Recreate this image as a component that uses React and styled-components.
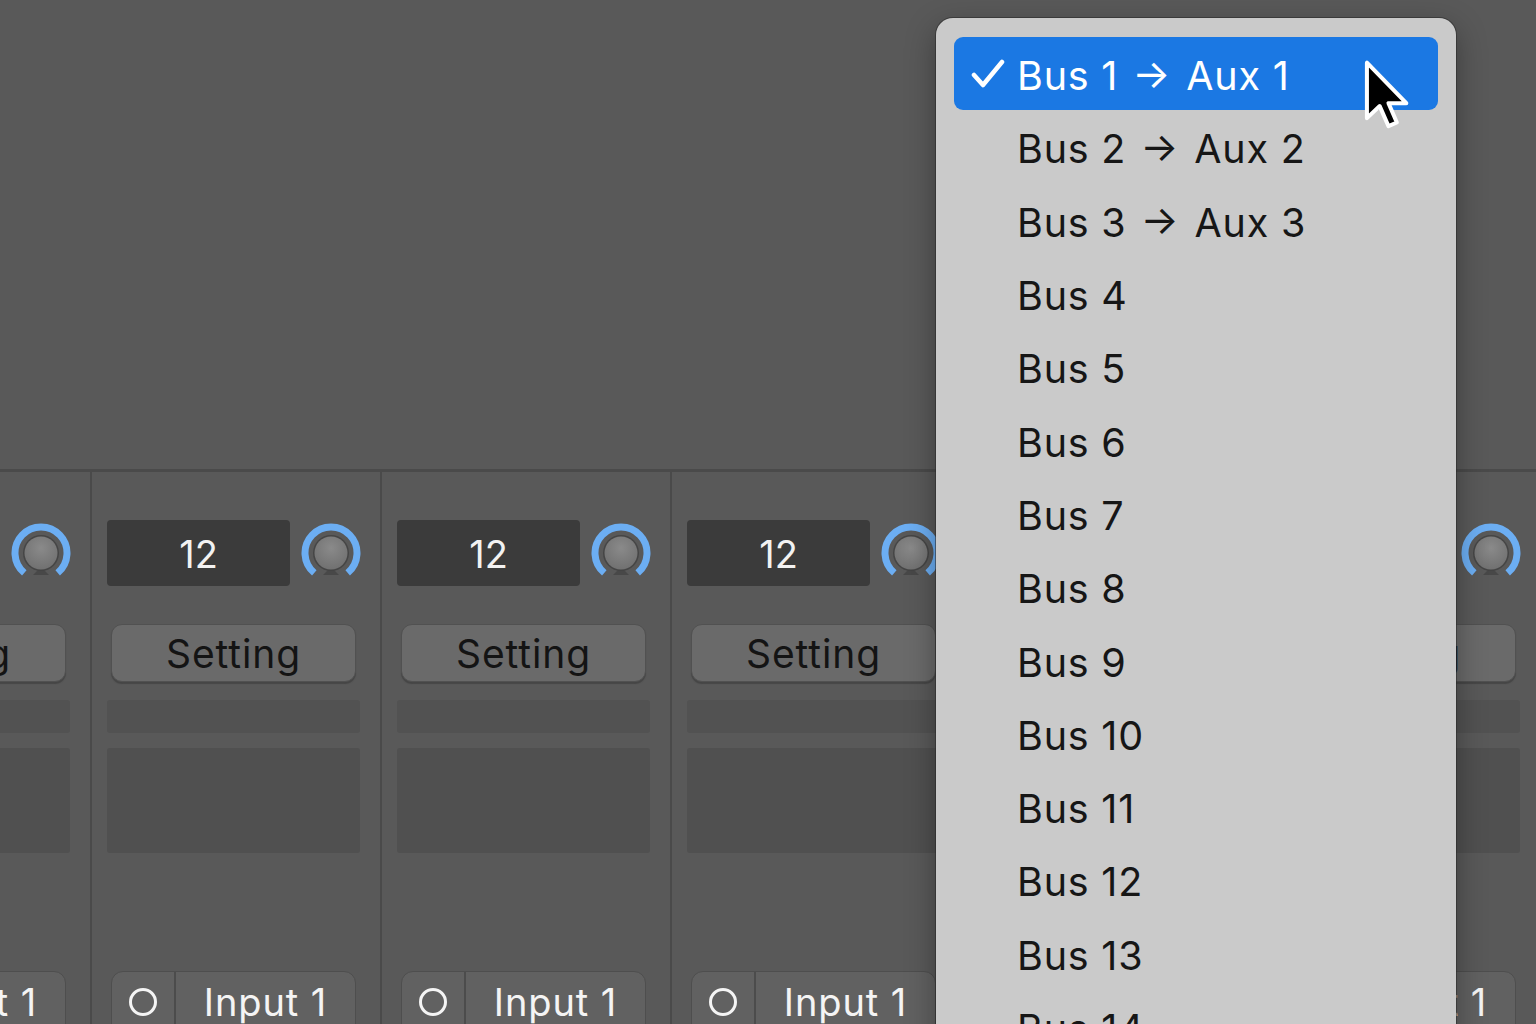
import React from "react";
import styled, { createGlobalStyle } from "styled-components";

const Global = createGlobalStyle`
  html, body { margin: 0; padding: 0; background: #585858; }
  body { font-family: Inter, "Open Sans", "Liberation Sans", sans-serif; }
  * { box-sizing: border-box; }
`;

const Page = styled.div`
  position: relative;
  width: 1536px;
  height: 1024px;
  overflow: hidden;
  background: #595959;
`;

const TopArea = styled.div`
  height: 469px;
  background: #595959;
`;

const StripRow = styled.div`
  display: flex;
  margin-left: -200px;
  border-top: 3px solid #4a4a4a;
`;

const Strip = styled.div`
  flex: 0 0 290px;
  border-left: 2px solid #4a4a4a;
  background: #595959;
  display: flex;
  flex-direction: column;
  align-items: flex-start;
  padding: 48px 0 0 15px;
  & > * { flex-shrink: 0; }
`;

const TopLine = styled.div`
  display: flex;
  align-items: center;
  gap: 12px;
`;

const ValueBox = styled.div`
  width: 183px;
  height: 66px;
  border-radius: 4px;
  background: #3b3b3b;
  color: #f2f2f2;
  font-size: 38px;
  display: flex;
  align-items: center;
  justify-content: center;
  padding-top: 2px;
`;

const KnobWrap = styled.div`
  width: 60px;
  height: 60px;
  margin-left: -1px;
`;

const SettingButton = styled.div`
  margin: 38px 0 0 4px;
  width: 245px;
  height: 58px;
  border-radius: 11px;
  background: #6a6a6a;
  border: 1px solid #515151;
  box-shadow: 0 2px 1px #464646;
  color: #141414;
  font-size: 39px;
  letter-spacing: 0.9px;
  display: flex;
  align-items: center;
  justify-content: center;
`;

const Bar = styled.div`
  width: 253px;
  height: ${(p) => p.$h}px;
  margin-top: ${(p) => p.$mt}px;
  border-radius: 3px;
  background: ${(p) => p.$bg};
`;

const InputButton = styled.div`
  margin: 118px 0 0 4px;
  width: 245px;
  height: 70px;
  border-radius: 12px 12px 0 0;
  background: #616161;
  border: 1px solid #4e4e4e;
  display: flex;
  color: #f4f4f4;
  font-size: 38px;
`;

const RadioSeg = styled.div`
  flex: 0 0 64px;
  height: 100%;
  border-right: 2px solid #4c4c4c;
  display: flex;
  align-items: flex-start;
  justify-content: center;
  padding-top: 16px;
`;

const Ring = styled.div`
  width: 28px;
  height: 28px;
  border-radius: 50%;
  border: 3px solid #f4f4f4;
`;

const InputLabel = styled.div`
  flex: 1;
  text-align: center;
  padding-top: 7px;
  letter-spacing: 0.9px;
`;

const Menu = styled.div`
  position: absolute;
  left: 936px;
  top: 18px;
  width: 520px;
  height: 1100px;
  border-radius: 17px;
  background: #cacaca;
  box-shadow: 0 0 0 1px rgba(40, 40, 40, 0.55), 0 10px 30px rgba(0, 0, 0, 0.35);
  padding: 19px 18px 0 18px;
  display: flex;
  flex-direction: column;
`;

const MenuItem = styled.div`
  height: 73.3px;
  flex: 0 0 73.3px;
  border-radius: 9px;
  background: ${(p) => (p.$selected ? "#1b78e3" : "transparent")};
  color: ${(p) => (p.$selected ? "#ffffff" : "#161616")};
  display: flex;
  align-items: center;
  font-size: 39.5px;
  letter-spacing: 0.8px;
  position: relative;
  padding: 5px 0 0 63px;
  white-space: nowrap;
`;

const Check = styled.svg`
  position: absolute;
  left: 17px;
  top: 22px;
`;

const Arrow = styled.span`
  display: inline-block;
  margin: 0 15px 0 14px;
  font-size: 40px;
  position: relative;
  top: -3px;
`;

const Cursor = styled.svg`
  position: absolute;
  left: 1361px;
  top: 59px;
`;

function Knob() {
  const cx = 30, cy = 30, r = 26;
  const a0 = (130 * Math.PI) / 180;
  const a1 = (50 * Math.PI) / 180;
  const p0 = [cx + r * Math.cos(a0), cy + r * Math.sin(a0)];
  const p1 = [cx + r * Math.cos(a1), cy + r * Math.sin(a1)];
  return (
    <KnobWrap>
      <svg width="60" height="60" viewBox="0 0 60 60">
        <defs>
          <radialGradient id="kg" cx="50%" cy="35%" r="65%">
            <stop offset="0%" stopColor="#8a8a8a" />
            <stop offset="100%" stopColor="#717171" />
          </radialGradient>
        </defs>
        <path
          d={`M ${p0[0]} ${p0[1]} A ${r} ${r} 0 1 1 ${p1[0]} ${p1[1]}`}
          fill="none"
          stroke="#6caef3"
          strokeWidth="7"
        />
        <path d="M 22 52 L 30 44 L 38 52" fill="#484848" />
        <circle cx={cx} cy={cy} r="18" fill="#454545" />
        <circle cx={cx} cy={cy} r="16.5" fill="url(#kg)" />
      </svg>
    </KnobWrap>
  );
}

function ChannelStrip() {
  return (
    <Strip>
      <TopLine>
        <ValueBox>12</ValueBox>
        <Knob />
      </TopLine>
      <SettingButton>Setting</SettingButton>
      <Bar $h={33} $mt={18} $bg="#525252" />
      <Bar $h={105} $mt={15} $bg="#505050" />
      <InputButton>
        <RadioSeg>
          <Ring />
        </RadioSeg>
        <InputLabel>Input 1</InputLabel>
      </InputButton>
    </Strip>
  );
}

const items = [
  ["Bus 1", "Aux 1"],
  ["Bus 2", "Aux 2"],
  ["Bus 3", "Aux 3"],
  ["Bus 4"],
  ["Bus 5"],
  ["Bus 6"],
  ["Bus 7"],
  ["Bus 8"],
  ["Bus 9"],
  ["Bus 10"],
  ["Bus 11"],
  ["Bus 12"],
  ["Bus 13"],
  ["Bus 14"],
];

export default function App() {
  return (
    <Page>
      <Global />
      <TopArea />
      <StripRow>
        {[0, 1, 2, 3, 4, 5].map((i) => (
          <ChannelStrip key={i} />
        ))}
      </StripRow>
      <Menu>
        {items.map(([a, b], i) => (
          <MenuItem key={i} $selected={i === 0}>
            {i === 0 && (
              <Check width="34" height="30" viewBox="0 0 34 30">
                <path
                  d="M3 16 L12 26 L31 3"
                  fill="none"
                  stroke="#ffffff"
                  strokeWidth="4.5"
                  strokeLinecap="round"
                  strokeLinejoin="round"
                />
              </Check>
            )}
            {a}
            {b && (
              <>
                <Arrow>→</Arrow>
                {b}
              </>
            )}
          </MenuItem>
        ))}
      </Menu>
      <Cursor width="52" height="73" viewBox="0 0 14 20">
        <path
          d="M1.5 1 L1.5 16.2 L5 12.9 L7.4 18.4 L9.7 17.4 L7.4 12.1 L12.3 12.1 Z"
          fill="#000"
          stroke="#fff"
          strokeWidth="1.1"
          strokeLinejoin="round"
        />
      </Cursor>
    </Page>
  );
}
